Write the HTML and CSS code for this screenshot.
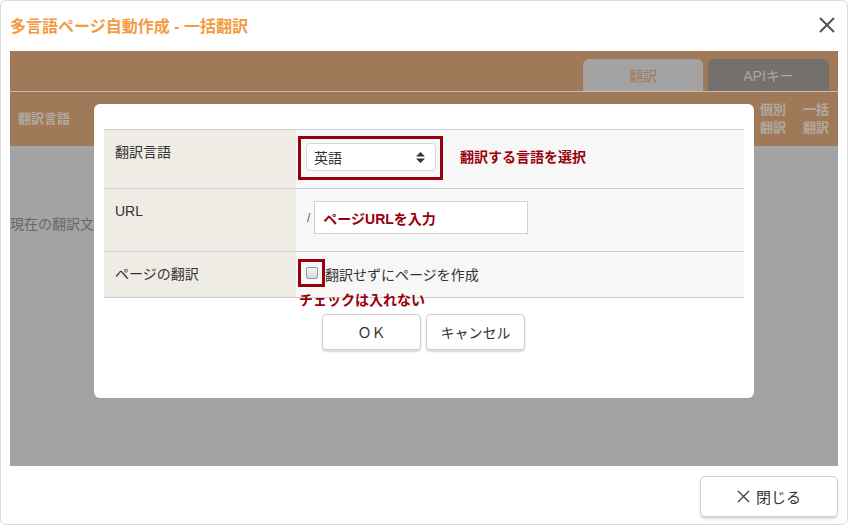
FILE: index.html
```html
<!DOCTYPE html>
<html lang="ja">
<head>
<meta charset="utf-8">
<title>多言語ページ自動作成 - 一括翻訳</title>
<link rel="stylesheet" href="styles.css">
</head>
<body>
<div class="dialog">
  <div class="titlebar">
    <div class="title">多言語ページ自動作成 - 一括翻訳</div>
    <svg class="close-x" width="16" height="16" viewBox="0 0 16 16"><path d="M1 1L15 15M15 1L1 15" stroke="#555" stroke-width="2" fill="none"/></svg>
  </div>
  <div class="frame">
    <div class="tabbar">
      <div class="tab tab-active">翻訳</div>
      <div class="tab tab-api">APIキー</div>
    </div>
    <div class="thead">
      <div class="th-lang">翻訳言語</div>
      <div class="th-right">
        <div class="th-small">個別<br>翻訳</div>
        <div class="th-small">一括<br>翻訳</div>
      </div>
    </div>
    <div class="tbody">
      <div class="current">現在の翻訳文</div>
    </div>

    <div class="modal">
      <div class="form">
        <div class="row row1">
          <div class="label">翻訳言語</div>
          <div class="field">
            <div class="redbox">
              <div class="select">
                <span>英語</span>
                <svg width="9" height="11" viewBox="0 0 9 11"><path d="M4.5 0L9 4.5H0Z M4.5 11L0 6.5H9Z" fill="#333"/></svg>
              </div>
            </div>
            <div class="note">翻訳する言語を選択</div>
          </div>
        </div>
        <div class="row row2">
          <div class="label">URL</div>
          <div class="field field-url">
            <span class="slash">/</span>
            <div class="input">ページURLを入力</div>
          </div>
        </div>
        <div class="row row3">
          <div class="label">ページの翻訳</div>
          <div class="field field-check">
            <div class="redbox-check"><span class="checkbox"></span></div>
            <span class="check-text">翻訳せずにページを作成</span>
          </div>
        </div>
      </div>
      <div class="note note-check">チェックは入れない</div>
      <div class="buttons">
        <div class="btn">ＯＫ</div>
        <div class="btn">キャンセル</div>
      </div>
    </div>
  </div>
  <div class="footer">
    <div class="btn-close">
      <svg width="13" height="13" viewBox="0 0 13 13"><path d="M1 1L12 12M12 1L1 12" stroke="#444" stroke-width="1.4" fill="none"/></svg>
      <span>閉じる</span>
    </div>
  </div>
</div>
</body>
</html>
```

FILE: styles.css
```css
html, body {
  margin: 0;
  padding: 0;
  background: #fff;
}
body {
  font-family: "Liberation Sans", "Noto Sans CJK JP", sans-serif;
  color: #333;
}
.dialog {
  width: 848px;
  height: 525px;
  box-sizing: border-box;
  border: 1px solid #dcdcdc;
  border-radius: 6px;
  display: flex;
  flex-direction: column;
  overflow: hidden;
}
.titlebar {
  height: 50px;
  flex: none;
  display: flex;
  align-items: center;
  justify-content: space-between;
  padding: 0 12px 0 9px;
}
.title {
  color: #f39a42;
  font-weight: bold;
  font-size: 16px;
  margin-top: -3px;
}
.close-x {
  margin-top: -2px;
}
.frame {
  position: relative;
  flex: none;
  height: 415px;
  margin: 0 9px;
  background: #a3a3a3;
  display: flex;
  flex-direction: column;
}
.tabbar {
  height: 40px;
  flex: none;
  background: #a07a58;
  display: flex;
  justify-content: flex-end;
  align-items: flex-end;
  gap: 5px;
  padding-right: 9px;
  border-bottom: 1px solid #c6bcb2;
}
.tab {
  height: 32px;
  width: 120px;
  border-radius: 6px 6px 0 0;
  display: flex;
  align-items: center;
  justify-content: center;
  font-size: 14px;
}
.tab-active {
  background: #a3a3a3;
  color: #a07a58;
}
.tab-api {
  width: 121px;
  background: #75706b;
  color: #a9a9a9;
}
.thead {
  height: 54px;
  flex: none;
  background: #a07a58;
  display: flex;
  align-items: center;
  justify-content: space-between;
  padding: 0 9px 0 8px;
  color: #b1aaa3;
  font-weight: bold;
  font-size: 13px;
}
.th-lang {
  margin-top: -3px;
}
.th-right {
  display: flex;
  gap: 17px;
}
.th-small {
  line-height: 18px;
  text-align: right;
}
.tbody {
  flex: 1;
  padding-top: 67px;
}
.current {
  font-size: 14px;
  color: #686868;
}
.modal {
  position: absolute;
  left: 84px;
  top: 53px;
  width: 660px;
  height: 294px;
  box-sizing: border-box;
  background: #fff;
  border-radius: 6px;
  padding: 25px 10px 0;
}
.form {
  border-top: 1px solid #cfcfcf;
}
.row {
  display: flex;
  border-bottom: 1px solid #cfcfcf;
}
.row1 { height: 58px; }
.row2 { height: 62px; }
.row3 { height: 45px; }
.label {
  width: 192px;
  flex: none;
  background: #efebe5;
  box-sizing: border-box;
  padding: 13px 0 0 11px;
  font-size: 14px;
  line-height: 18px;
  color: #333;
}
.field {
  flex: 1;
  background: #f7f7f7;
  display: flex;
  align-items: center;
}
.redbox {
  margin-left: 2px;
  border: 3px solid #99000b;
  padding: 4px 4px 6px 5px;
  align-self: flex-start;
  margin-top: 6px;
}
.select {
  width: 130px;
  height: 28px;
  box-sizing: border-box;
  background: #fff;
  border: 1px solid #d6d6d6;
  border-radius: 4px;
  display: flex;
  align-items: center;
  justify-content: space-between;
  padding: 0 10px 0 7px;
  font-size: 14px;
  color: #333;
}
.note {
  color: #99000b;
  font-weight: bold;
  font-size: 14px;
}
.row1 .note {
  margin-left: 17px;
  margin-top: -6px;
}
.field-url {
  align-items: flex-start;
  padding-top: 12px;
}
.slash {
  margin: 10px 0 0 11px;
  font-size: 12px;
  color: #555;
}
.input {
  margin-left: 4px;
  width: 214px;
  height: 33px;
  box-sizing: border-box;
  background: #fff;
  border: 1px solid #d2d2d2;
  display: flex;
  align-items: center;
  padding-left: 8px;
  color: #99000b;
  font-weight: bold;
  font-size: 14px;
}
.field-check {
  align-items: flex-start;
  padding-top: 7px;
}
.redbox-check {
  margin-left: 2px;
  width: 27px;
  height: 28px;
  box-sizing: border-box;
  border: 3px solid #99000b;
  display: flex;
  align-items: center;
  justify-content: center;
}
.checkbox {
  width: 12px;
  height: 12px;
  box-sizing: border-box;
  border: 1px solid #9a9a9a;
  border-radius: 2px;
  background: linear-gradient(#f4f4f4, #d9d9d9);
}
.check-text {
  font-size: 14px;
  color: #333;
  margin-top: 5px;
}
.note-check {
  position: absolute;
  left: 205px;
  top: 185px;
}
.buttons {
  display: flex;
  gap: 5px;
  margin: 16px 0 0 218px;
}
.btn {
  width: 99px;
  height: 36px;
  box-sizing: border-box;
  border: 1px solid #cfcfcf;
  border-radius: 4px;
  background: #fff;
  box-shadow: 0 2px 2px rgba(0,0,0,0.15);
  display: flex;
  align-items: center;
  justify-content: center;
  font-size: 14px;
  color: #333;
}
.footer {
  flex: 1;
  display: flex;
  justify-content: flex-end;
  align-items: flex-start;
  padding: 10px 9px 0 0;
}
.btn-close {
  width: 138px;
  height: 41px;
  box-sizing: border-box;
  border: 1px solid #cfcfcf;
  border-radius: 5px;
  box-shadow: 0 2px 2px rgba(0,0,0,0.15);
  display: flex;
  align-items: center;
  justify-content: center;
  gap: 6px;
  font-size: 15px;
  color: #333;
}
```
